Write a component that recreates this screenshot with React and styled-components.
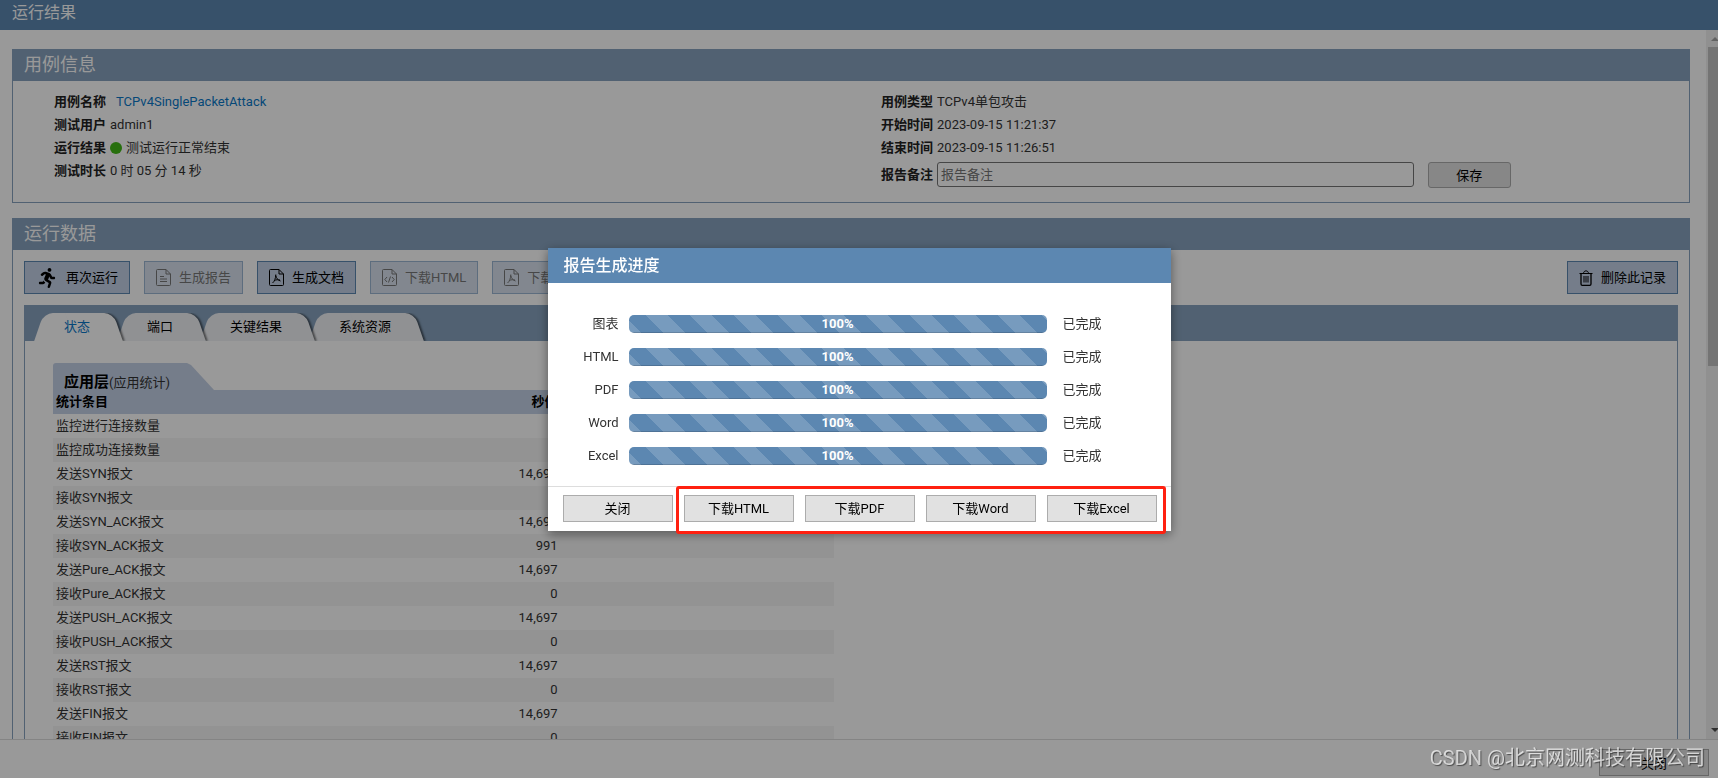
import React from 'react';
import styled, { createGlobalStyle } from 'styled-components';
import { FaRunning } from 'react-icons/fa';

const GlobalStyle = createGlobalStyle`
  * {
    box-sizing: border-box;
  }

  body {
    margin: 0;
    background: #fff;
    color: #333;
    font-family: Roboto, "Noto Sans CJK SC", sans-serif;
    font-size: 13px;
    line-height: 18px;
  }

  button, input {
    font: inherit;
    color: #000;
  }
`;

const Page = styled.div`
  display: flex;
  flex-direction: column;
  height: 100vh;
`;

const TopBar = styled.header`
  flex: none;
  height: 30px;
  padding-left: 12px;
  background: #5c87b1;
  color: #fff;
  font-size: 16px;
  line-height: 25px;
`;

const Body = styled.div`
  display: flex;
  flex: 1;
  min-height: 0;
`;

const Content = styled.main`
  flex: 1;
  padding: 19px 16px 0 12px;
  overflow-y: auto;
  scrollbar-width: none;
`;

const ScrollTrack = styled.div`
  display: flex;
  flex: none;
  flex-direction: column;
  width: 12px;
  padding-left: 2px;
  overflow: hidden;
  background: #f1f1f1;
`;

const ScrollThumb = styled.div`
  height: 45%;
  background: #c1c1c1;
`;

const ScrollArrow = styled.svg`
  flex: none;
  width: 17px;
  height: 17px;
  margin-top: ${(props) => (props.$end ? 'auto' : '0')};
  fill: ${(props) => (props.$end ? '#505050' : '#a3a3a3')};
`;

const Panel = styled.section`
  margin-bottom: 15px;
  border: 1px solid #87a2be;
`;

const PanelTitle = styled.h2`
  height: 31px;
  margin: 0;
  padding-left: 11px;
  background: #87a2be;
  color: #fff;
  font-size: 18px;
  font-weight: normal;
  line-height: 30px;
`;

const InfoGrid = styled.div`
  display: grid;
  grid-template-columns: 1fr 1fr;
  padding: 9px 0 12px;
`;

const InfoColumn = styled.div`
  padding-left: ${(props) => props.$indent};
`;

const InfoRow = styled.div`
  display: flex;
  align-items: center;
  gap: 4px;
  height: ${(props) => (props.$tall ? '31px' : '23px')};
`;

const InfoLabel = styled.label`
  flex: none;
  color: #222;
  font-weight: bold;
`;

const CaseLink = styled.a`
  margin-left: 6px;
  color: #0b79c9;
  text-decoration: none;
`;

const Dot = styled.span`
  width: 12px;
  height: 12px;
  border-radius: 50%;
  background: #41b916;
`;

const RemarkInput = styled.input`
  width: 59%;
  height: 25px;
  padding: 0 3px;
  border: 1px solid #767676;
  border-radius: 3px;
  background: #fff;

  &::placeholder {
    color: #757575;
  }
`;

const SaveButton = styled.button`
  width: 83px;
  height: 26px;
  margin-left: 10px;
  padding: 2px 0 0;
  border: 1px solid #acacac;
  border-radius: 3px;
  background: #e1e1e1;
`;

const Toolbar = styled.div`
  display: flex;
  gap: 14px;
  padding: 11px;
`;

const ToolButton = styled.button`
  display: flex;
  align-items: center;
  gap: 8px;
  height: 33px;
  margin-left: ${(props) => (props.$last ? 'auto' : '0')};
  padding: 0 11px;
  border: 1px solid #5c87b1;
  background: #c3d0e6;
  white-space: nowrap;

  &:disabled {
    border-color: #9bb6d3;
    background: #d9e2ef;
    color: #777;
  }
`;

const RunIcon = styled(FaRunning)`
  width: 22px;
  height: 20px;
`;

const FileSvg = styled.svg`
  width: 15px;
  height: 17px;
  fill: none;
  stroke: currentColor;
`;

const TrashSvg = styled.svg`
  width: 14px;
  height: 16px;
  fill: none;
  stroke: currentColor;
`;

const TabPanel = styled.div`
  margin: 0 11px;
  border: 1px solid #87a2be;
`;

const TabBar = styled.div`
  display: flex;
  align-items: flex-end;
  height: 35px;
  padding-left: 9px;
  background: #87a2be;
`;

const TabList = styled.div`
  display: flex;
  isolation: isolate;
  padding: 5px 12px 0 0;
  overflow: hidden;
`;

/* The slanted sides are two skewed halves behind the label. */
const Tab = styled.button`
  position: relative;
  z-index: ${(props) => props.$level};
  height: 28px;
  margin-right: -6px;
  padding: 0 33px 0 30px;
  border: 0;
  background: none;
  color: ${(props) => (props.$active ? '#0b79c9' : '#000')};

  &::before,
  &::after {
    content: "";
    position: absolute;
    z-index: -1;
    top: 0;
    bottom: 0;
    background: ${(props) => (props.$active ? '#fff' : '#f0f2f6')};
  }

  &::before {
    left: 5px;
    right: 40%;
    border-top-left-radius: 9px;
    transform: skewX(-19deg);
  }

  &::after {
    left: 40%;
    right: 5px;
    border-top-right-radius: 9px;
    box-shadow: 2px 0 2px rgba(0, 0, 0, 0.5);
    clip-path: inset(0 -6px 0 0);
    transform: skewX(19deg);
  }
`;

const TabContent = styled.div`
  display: grid;
  grid-template-columns: 1fr 1fr;
  gap: 34px;
  padding: 22px 28px;
`;

const GroupTitle = styled.h3`
  width: fit-content;
  height: 27px;
  margin: 0;
  padding: 11px 44px 0 11px;
  border-top-left-radius: 3px;
  background: #c3d0e6;
  clip-path: polygon(0 0, calc(100% - 27px) 0, calc(100% - 23px) 2px, 100% 100%, 0 100%);
  color: #000;
  font-size: 15px;
  line-height: 16px;
`;

const GroupNote = styled.span`
  color: #333;
  font-size: 13px;
  font-weight: normal;
`;

const StatTable = styled.table`
  width: 100%;
  border-collapse: collapse;
  table-layout: fixed;

  th {
    height: 24px;
    padding: 0 3px;
    background: #c3d0e6;
    color: #000;
    text-align: left;
  }

  td {
    height: 24px;
    padding: 0 3px;
  }

  tbody tr:nth-child(even) {
    background: #f6f6f6;
  }

  th:nth-child(2),
  td:nth-child(2) {
    text-align: right;
  }
`;

const Column = styled.col`
  width: ${(props) => props.$width};
`;

const BottomBar = styled.footer`
  display: flex;
  flex: none;
  justify-content: flex-end;
  height: 39px;
  padding: 9px 9px 0;
  border-top: 1px solid #ddd;
`;

const PlainButton = styled.button`
  width: 110px;
  height: 27px;
  padding: 2px 0 0;
  border: 1px solid #acacac;
  background: #e1e1e1;
`;

const Overlay = styled.div`
  position: fixed;
  z-index: 10;
  inset: 0;
  display: flex;
  align-items: center;
  justify-content: center;
  background: rgba(0, 0, 0, 0.4);
`;

const Dialog = styled.div`
  width: 623px;
  background: #fff;
  box-shadow: 0 3px 10px rgba(0, 0, 0, 0.45);
`;

const DialogTitle = styled.h2`
  height: 35px;
  margin: 0;
  padding-left: 16px;
  background: #5c87b1;
  color: #fff;
  font-size: 16px;
  font-weight: 500;
  line-height: 35px;
`;

const ProgressList = styled.div`
  display: flex;
  flex-direction: column;
  gap: 15px;
  padding: 32px 0 21px;
`;

const ProgressRow = styled.div`
  display: grid;
  grid-template-columns: 71px 1fr 108px;
  align-items: center;
  height: 18px;
`;

const ProgressLabel = styled.span`
  text-align: right;
`;

const ProgressTrack = styled.div`
  height: 18px;
  margin: 0 16px 0 10px;
  border-radius: 5px;
  background: #e8e8e8;
  overflow: hidden;
`;

const ProgressFill = styled.div`
  height: 100%;
  background-color: #5c87b1;
  background-image: linear-gradient(
    45deg,
    rgba(255, 255, 255, 0.17) 25%,
    transparent 25%,
    transparent 50%,
    rgba(255, 255, 255, 0.17) 50%,
    rgba(255, 255, 255, 0.17) 75%,
    transparent 75%
  );
  background-position: 17px 0;
  background-size: 44px 44px;
  box-shadow: inset 0 -1px 0 rgba(0, 0, 0, 0.15);
  color: #fff;
  font-weight: bold;
  text-align: center;
`;

const DialogFooter = styled.div`
  display: flex;
  gap: 11px;
  padding: 8px 14px 9px 15px;
  border-top: 1px solid #ddd;
`;

const DownloadGroup = styled.div`
  position: relative;
  display: flex;
  gap: 11px;

  &::after {
    content: "";
    position: absolute;
    inset: -9px -9px -12px -8px;
    border: 3px solid #ff2010;
    border-radius: 3px;
    pointer-events: none;
  }
`;

const Watermark = styled.div`
  position: fixed;
  z-index: 20;
  right: 13px;
  bottom: 6px;
  color: rgba(255, 255, 255, 0.7);
  font-size: 20px;
  line-height: 28px;
  text-shadow: 1px 1px 1px rgba(0, 0, 0, 0.5);
  pointer-events: none;
`;

const stats = [
  ['监控进行连接数量', '0'],
  ['监控成功连接数量', '0'],
  ['发送SYN报文', '14,697'],
  ['接收SYN报文', '0'],
  ['发送SYN_ACK报文', '14,697'],
  ['接收SYN_ACK报文', '991'],
  ['发送Pure_ACK报文', '14,697'],
  ['接收Pure_ACK报文', '0'],
  ['发送PUSH_ACK报文', '14,697'],
  ['接收PUSH_ACK报文', '0'],
  ['发送RST报文', '14,697'],
  ['接收RST报文', '0'],
  ['发送FIN报文', '14,697'],
  ['接收FIN报文', '0'],
];

const tabs = ['状态', '端口', '关键结果', '系统资源'];

const progress = [
  { name: '图表', percent: 100 },
  { name: 'HTML', percent: 100 },
  { name: 'PDF', percent: 100 },
  { name: 'Word', percent: 100 },
  { name: 'Excel', percent: 100 },
];

const downloads = ['HTML', 'PDF', 'Word', 'Excel'];

const fileMarks = {
  text: 'M4 7.5h4M4 10h7M4 12.5h7',
  pdf: 'M3.5 14c1.800-1.200 3.200-4.500 3.300-8.500M6.800 6.500c.500 2.500 2 4.800 4.700 5.500M5.500 11.500c1.500-.800 3.500-1 5.500-.500',
  code: 'M5 8l-2.2 2.5L5 13M10 8l2.2 2.5L10 13M8.5 7.5l-2 6',
};

const FileIcon = ({ kind }) => (
  <FileSvg viewBox="0 0 15 17" aria-hidden="true">
    <path d="M10 .5H1.500a1 1 0 0 0-1 1v14a1 1 0 0 0 1 1h12a1 1 0 0 0 1-1V5z" />
    <path d="M10 .5V5h4.500" />
    <path d={fileMarks[kind]} />
  </FileSvg>
);

const TrashIcon = () => (
  <TrashSvg viewBox="0 0 14 16" aria-hidden="true">
    <path d="M.5 3.5h13M4.5 3.5c0-3.5 5-3.5 5 0" />
    <path d="M2 3.5v10.5a1.3 1.3 0 0 0 1.3 1.3h7.4a1.3 1.3 0 0 0 1.3-1.3V3.5" strokeWidth="1.3" />
    <path d="M5 6v6.5M7 6v6.5M9 6v6.5" />
  </TrashSvg>
);

const CaseInfo = () => (
  <Panel>
    <PanelTitle>用例信息</PanelTitle>
    <InfoGrid>
      <InfoColumn $indent="41px">
        <InfoRow>
          <InfoLabel as="span">用例名称</InfoLabel>
          <CaseLink href="#case">TCPv4SinglePacketAttack</CaseLink>
        </InfoRow>
        <InfoRow>
          <InfoLabel as="span">测试用户</InfoLabel>
          <span>admin1</span>
        </InfoRow>
        <InfoRow>
          <InfoLabel as="span">运行结果</InfoLabel>
          <Dot />
          <span>测试运行正常结束</span>
        </InfoRow>
        <InfoRow>
          <InfoLabel as="span">测试时长</InfoLabel>
          <span>0 时 05 分 14 秒</span>
        </InfoRow>
      </InfoColumn>
      <InfoColumn $indent="30px">
        <InfoRow>
          <InfoLabel as="span">用例类型</InfoLabel>
          <span>TCPv4单包攻击</span>
        </InfoRow>
        <InfoRow>
          <InfoLabel as="span">开始时间</InfoLabel>
          <span>2023-09-15 11:21:37</span>
        </InfoRow>
        <InfoRow>
          <InfoLabel as="span">结束时间</InfoLabel>
          <span>2023-09-15 11:26:51</span>
        </InfoRow>
        <InfoRow $tall>
          <InfoLabel htmlFor="remark">报告备注</InfoLabel>
          <RemarkInput id="remark" type="text" placeholder="报告备注" />
          <SaveButton type="button">保存</SaveButton>
        </InfoRow>
      </InfoColumn>
    </InfoGrid>
  </Panel>
);

const RunData = () => (
  <Panel>
    <PanelTitle>运行数据</PanelTitle>
    <Toolbar>
      <ToolButton type="button">
        <RunIcon />
        再次运行
      </ToolButton>
      <ToolButton type="button" disabled>
        <FileIcon kind="text" />
        生成报告
      </ToolButton>
      <ToolButton type="button">
        <FileIcon kind="pdf" />
        生成文档
      </ToolButton>
      <ToolButton type="button" disabled>
        <FileIcon kind="code" />
        下载HTML
      </ToolButton>
      <ToolButton type="button" disabled>
        <FileIcon kind="pdf" />
        下载PDF
      </ToolButton>
      <ToolButton type="button" $last>
        <TrashIcon />
        删除此记录
      </ToolButton>
    </Toolbar>
    <TabPanel>
      <TabBar>
        <TabList role="tablist">
          {tabs.map((name, i) => (
            <Tab
              key={name}
              type="button"
              role="tab"
              aria-selected={i === 0}
              $active={i === 0}
              $level={tabs.length - i}
            >
              {name}
            </Tab>
          ))}
        </TabList>
      </TabBar>
      <TabContent>
        <div>
          <GroupTitle>
            应用层
            <GroupNote>(应用统计)</GroupNote>
          </GroupTitle>
          <StatTable>
            <colgroup>
              <Column $width="45%" />
              <Column $width="20%" />
              <Column $width="35%" />
            </colgroup>
            <thead>
              <tr>
                <th>统计条目</th>
                <th>秒值</th>
                <th />
              </tr>
            </thead>
            <tbody>
              {stats.map(([name, value]) => (
                <tr key={name}>
                  <td>{name}</td>
                  <td>{value}</td>
                  <td />
                </tr>
              ))}
            </tbody>
          </StatTable>
        </div>
      </TabContent>
    </TabPanel>
  </Panel>
);

const ProgressDialog = () => (
  <Overlay>
    <Dialog role="dialog" aria-labelledby="dialog-title">
      <DialogTitle id="dialog-title">报告生成进度</DialogTitle>
      <ProgressList>
        {progress.map(({ name, percent }) => (
          <ProgressRow key={name}>
            <ProgressLabel>{name}</ProgressLabel>
            <ProgressTrack role="progressbar" aria-label={name} aria-valuenow={percent}>
              <ProgressFill style={{ width: `${percent}%` }}>{`${percent}%`}</ProgressFill>
            </ProgressTrack>
            <span>已完成</span>
          </ProgressRow>
        ))}
      </ProgressList>
      <DialogFooter>
        <PlainButton type="button">关闭</PlainButton>
        <DownloadGroup>
          {downloads.map((name) => (
            <PlainButton key={name} type="button">{`下载${name}`}</PlainButton>
          ))}
        </DownloadGroup>
      </DialogFooter>
    </Dialog>
  </Overlay>
);

const App = () => (
  <>
    <GlobalStyle />
    <Page>
      <TopBar>运行结果</TopBar>
      <Body>
        <Content>
          <CaseInfo />
          <RunData />
        </Content>
        <ScrollTrack aria-hidden="true">
          <ScrollArrow viewBox="0 0 17 17">
            <path d="M3 11l4-4 4 4z" />
          </ScrollArrow>
          <ScrollThumb />
          <ScrollArrow viewBox="0 0 17 17" $end>
            <path d="M3 6l4 4 4-4z" />
          </ScrollArrow>
        </ScrollTrack>
      </Body>
      <BottomBar>
        <PlainButton type="button">关闭</PlainButton>
      </BottomBar>
    </Page>
    <ProgressDialog />
    <Watermark>CSDN @北京网测科技有限公司</Watermark>
  </>
);

export default App;
